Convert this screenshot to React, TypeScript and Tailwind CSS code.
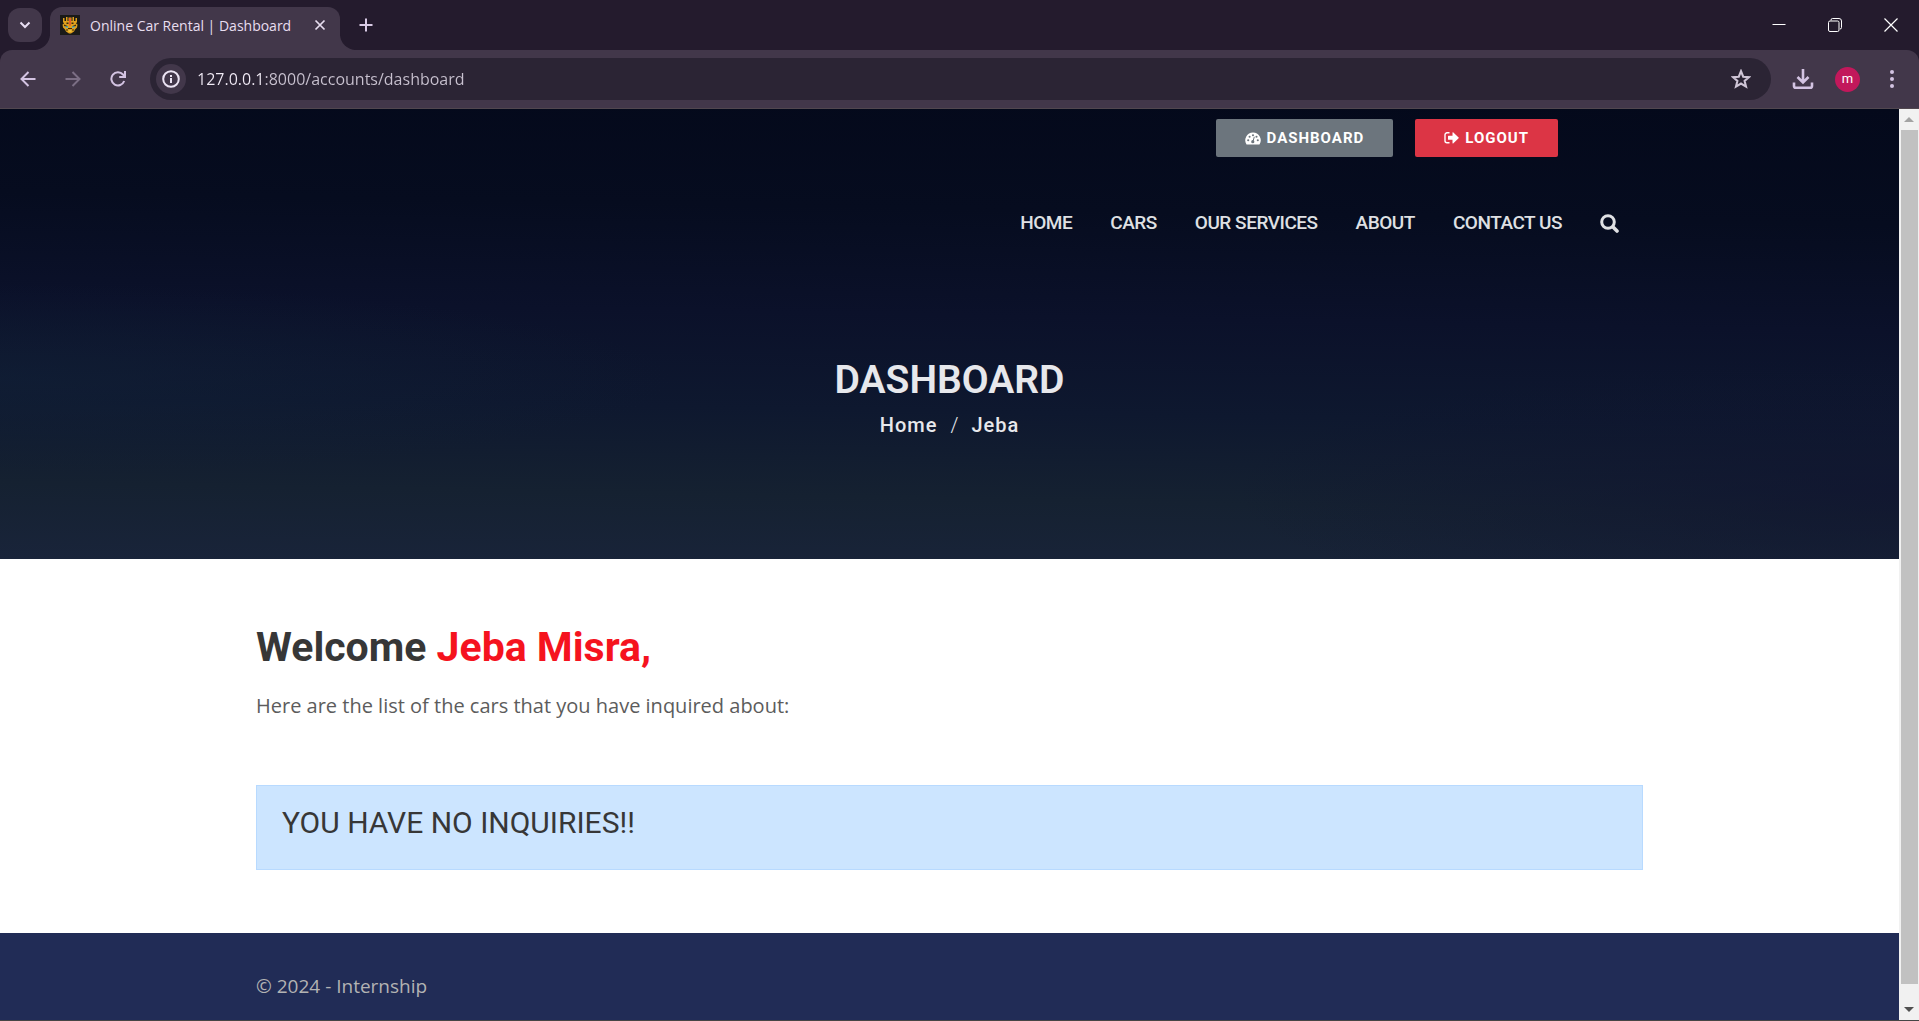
import type { ReactNode } from "react";

const navItems = ["HOME", "CARS", "OUR SERVICES", "ABOUT", "CONTACT US"];

const uiFont = "font-['Segoe_UI','Open_Sans',sans-serif]";

function IconButton({ label, className, children }: { label: string; className?: string; children: ReactNode }) {
  return (
    <button type="button" aria-label={label} className={`flex shrink-0 items-center justify-center ${className ?? ""}`}>
      {children}
    </button>
  );
}

function Favicon() {
  return (
    <svg width="20" height="20" viewBox="0 0 20 20" className="shrink-0" aria-hidden="true">
      <rect width="20" height="20" fill="#1a1a18" />
      <path d="M3 3h1.500v3H6V2h1.500v4h1V2.500h3V6h1V2H14v4h1.500V3H17v4l-1 1.500 1.500 1-.5 3-2 2-1 2-3 2H9l-3-2-1-2-2-2-.5-3L4 8.500 3 7z" fill="#e0a11c" />
      <path d="M9.300 3h1.400v7.500H9.300z" fill="#e8452f" />
      <path d="M6.500 7.500h2v1.500h-2zM11.500 7.500h2v1.500h-2zM4 9.500l3.500 1.500v1L4 11zM16 9.500L12.500 11v1L16 11zM6 14.500h2v1H6zM12 14.500h2v1h-2zM8 13h4v1H8z" fill="#3b2a10" />
      <path d="M5 11.500h3v1.300H6zM12 11.500h3l-1 1.300h-2z" fill="#45b5dc" />
      <path d="M8.500 15.500h3v1h-3z" fill="#fbe05a" />
    </svg>
  );
}

function GaugeIcon() {
  return (
    <svg width="16" height="13" viewBox="0 0 16 13" aria-hidden="true">
      <path d="M8 .5a7.700 7.700 0 0 0-6.600 11.700.7.7 0 0 0 .6.300h12a.7.7 0 0 0 .6-.3A7.700 7.700 0 0 0 8 .5z" fill="currentColor" />
      <g fill="#6c757d">
        <circle cx="3.200" cy="8.200" r="1.050" />
        <circle cx="4.600" cy="4.800" r="1.050" />
        <circle cx="8" cy="3.200" r="1.050" />
        <circle cx="11.500" cy="4.800" r="1.050" />
        <circle cx="12.800" cy="8.200" r="1.050" />
        <circle cx="7.800" cy="9.700" r="1.600" />
      </g>
      <path d="M7.900 9.700L9.200 5.200" stroke="#6c757d" strokeWidth="1" strokeLinecap="round" />
    </svg>
  );
}

function SignOutIcon() {
  return (
    <svg width="15" height="14" viewBox="0 0 15 14" aria-hidden="true">
      <path d="M5.500 1.800H3A2 2 0 0 0 1 3.800v6a2 2 0 0 0 2 2h2.500" fill="none" stroke="currentColor" strokeWidth="1.400" />
      <path d="M4.500 4.800h4V1.800a.5.5 0 0 1 .9-.4l5.200 5a.5.5 0 0 1 0 .8l-5.200 5a.5.5 0 0 1-.9-.4V8.800h-4a.5.5 0 0 1-.5-.5v-3a.5.5 0 0 1 .5-.5z" fill="currentColor" />
    </svg>
  );
}

function TabStrip() {
  return (
    <div className="flex h-[50px] items-stretch bg-[#241b2d]">
      <div className="flex items-start pl-2 pr-2 pt-2">
        <IconButton label="Search tabs" className="h-[34px] w-[34px] rounded-xl bg-[#42374a] text-[#e8def3]">
          <svg width="12" height="8" viewBox="0 0 12 8" fill="none" stroke="currentColor" strokeWidth="2" aria-hidden="true">
            <path d="M1.500 1.500L6 6l4.500-4.500" />
          </svg>
        </IconButton>
      </div>
      <div className="relative mt-[7px] flex w-[290px] items-start rounded-t-xl bg-[#42374a] pl-[10px] pr-2 pt-2 before:absolute before:bottom-0 before:-left-4 before:h-4 before:w-4 before:rounded-br-2xl before:shadow-[6px_6px_0_4px_#42374a] before:[clip-path:inset(0_0_0_0)] after:absolute after:-right-4 after:bottom-0 after:h-4 after:w-4 after:rounded-bl-2xl after:shadow-[-6px_6px_0_4px_#42374a] after:[clip-path:inset(0_0_0_0)]">
        <Favicon />
        <span className={`ml-[10px] flex-1 whitespace-nowrap text-sm leading-[22px] text-[#e8def0] ${uiFont}`}>
          Online Car Rental | Dashboard
        </span>
        <IconButton label="Close tab" className="h-5 w-6 text-[#e8def0]">
          <svg width="12" height="12" viewBox="0 0 12 12" stroke="currentColor" strokeWidth="1.700" aria-hidden="true">
            <path d="M1.500 1.500l9 9M10.500 1.500l-9 9" />
          </svg>
        </IconButton>
      </div>
      <IconButton label="New tab" className="ml-2 w-9 text-[#d9cbe6]">
        <svg width="14" height="14" viewBox="0 0 14 14" stroke="currentColor" strokeWidth="2" aria-hidden="true">
          <path d="M7 0.500v13M0.500 7h13" />
        </svg>
      </IconButton>
      <div className="ml-auto flex text-white">
        <IconButton label="Minimize" className="w-14">
          <svg width="14" height="14" viewBox="0 0 14 14" stroke="currentColor" aria-hidden="true">
            <path d="M0.500 6.500h13" />
          </svg>
        </IconButton>
        <IconButton label="Restore" className="w-14">
          <svg width="14" height="14" viewBox="0 0 14 14" fill="none" stroke="currentColor" aria-hidden="true">
            <rect x="0.500" y="3" width="10.500" height="10.500" rx="1.500" />
            <path d="M3 2.500V2A1.500 1.500 0 0 1 4.500 0.500H11A2.500 2.500 0 0 1 13.500 3v6.500A1.500 1.500 0 0 1 12 11" />
          </svg>
        </IconButton>
        <IconButton label="Close window" className="w-14">
          <svg width="14" height="14" viewBox="0 0 14 14" stroke="currentColor" strokeWidth="1.200" aria-hidden="true">
            <path d="M0.500 0.500l13 13M13.500 0.500l-13 13" />
          </svg>
        </IconButton>
      </div>
    </div>
  );
}

function Toolbar() {
  return (
    <div className="bg-[#241b2d]">
      <div className="flex h-[59px] items-center rounded-t-xl border-b border-[#51474f] bg-[#42374a] pr-[15px]">
        <div className="flex items-center pl-[5px] text-[#d3c3e2]">
          <IconButton label="Back" className="h-11 w-[45px]">
            <svg width="16" height="16" viewBox="0 0 16 16" fill="none" stroke="currentColor" strokeWidth="2" aria-hidden="true">
              <path d="M15.500 8H2M8.500 1L1.500 8l7 7" />
            </svg>
          </IconButton>
          <IconButton label="Forward" className="h-11 w-[45px] text-[#7b6e84]">
            <svg width="16" height="16" viewBox="0 0 16 16" fill="none" stroke="currentColor" strokeWidth="2" aria-hidden="true">
              <path d="M0.500 8H14M7.500 1l7 7-7 7" />
            </svg>
          </IconButton>
          <IconButton label="Reload" className="h-11 w-[45px]">
            <svg width="16" height="16" viewBox="0 0 16 16" fill="none" stroke="currentColor" strokeWidth="2" aria-hidden="true">
              <path d="M14.200 10A6.600 6.600 0 1 1 13 3.500L14.500 5.200M15 0v6H9.200" />
            </svg>
          </IconButton>
        </div>
        <div className="ml-[10px] flex h-[42px] flex-1 items-center rounded-full bg-[#2b2434] pl-1.5 pr-5">
          <IconButton label="View site information" className="h-[30px] w-[30px] rounded-full bg-[#42374a] text-[#ece4f4]">
            <svg width="18" height="18" viewBox="0 0 18 18" fill="none" stroke="currentColor" strokeWidth="2" aria-hidden="true">
              <circle cx="9" cy="9" r="7.800" />
              <path d="M9 8v5M9 5v2" />
            </svg>
          </IconButton>
          <input
            aria-label="Address"
            defaultValue="127.0.0.1:8000/accounts/dashboard"
            className={`ml-[11px] min-w-0 flex-1 bg-linear-to-r from-[#f2ecf7] from-[66px] to-[#c9c2d0] to-[66px] bg-clip-text text-base leading-6 text-transparent outline-none ${uiFont}`}
          />
          <IconButton label="Bookmark this tab" className="h-5 w-5 text-[#cfc5d6]">
            <svg width="20" height="20" viewBox="0 0 20 20" fill="none" stroke="currentColor" strokeWidth="2.100" aria-hidden="true">
              <path d="M10 2.200l2.200 5.500 5.900.4-4.500 3.800 1.400 5.700-5-3.100-5 3.100 1.400-5.700L1.900 8.100l5.900-.4z" />
            </svg>
          </IconButton>
        </div>
        <IconButton label="Downloads" className="ml-5 h-8 w-6 text-[#d3c3e2]">
          <svg width="22" height="22" viewBox="0 0 22 22" fill="none" stroke="currentColor" strokeWidth="2.600" aria-hidden="true">
            <path d="M11 1v13M5.500 9l5.500 5.500L16.500 9M2 14.500V18a1.800 1.800 0 0 0 1.800 1.800h14.400A1.800 1.800 0 0 0 20 18v-3.500" />
          </svg>
        </IconButton>
        <IconButton label="Profile" className="ml-5 h-[25px] w-[25px] rounded-full bg-[#c2185b] font-['Roboto',sans-serif] text-[13px] leading-4 text-white">
          m
        </IconButton>
        <IconButton label="Menu" className="ml-5 h-8 w-6 text-[#d3c3e2]">
          <svg width="4" height="18" viewBox="0 0 4 18" fill="currentColor" aria-hidden="true">
            <circle cx="2" cy="2" r="2" />
            <circle cx="2" cy="9" r="2" />
            <circle cx="2" cy="16" r="2" />
          </svg>
        </IconButton>
      </div>
    </div>
  );
}

function Hero() {
  return (
    <section className="min-h-[450px] bg-[radial-gradient(ellipse_at_0%_60%,rgba(18,34,56,0.5),transparent_25%),radial-gradient(ellipse_at_100%_85%,rgba(16,20,48,0.7),transparent_25%),linear-gradient(181deg,#04091b_0%,#060c1f_24%,#0b112a_46%,#0e182f_66%,#152131_84%,#19243a_100%)] font-['Roboto',sans-serif] text-[#e7e8ec]">
      <div className="mx-auto max-w-[1387px]">
        <div className="flex justify-end gap-[22px] pr-[85px] pt-[10px] text-[15px] font-bold leading-[22px] tracking-[1px] text-white">
          <a href="#dashboard" className="flex items-center gap-1.5 rounded-xs bg-[#6c757d] px-[29px] py-2">
            <GaugeIcon />
            DASHBOARD
          </a>
          <a href="#logout" className="flex items-center gap-1.5 rounded-xs bg-[#dc3545] px-[29px] py-2">
            <SignOutIcon />
            LOGOUT
          </a>
        </div>
        <nav className="mt-[52px] flex items-center justify-end gap-[38px] pr-6 text-[19px] font-medium leading-7 tracking-tight text-[#dfe0e3]">
          {navItems.map((item) => (
            <a key={item} href="#top">{item}</a>
          ))}
          <button type="button" aria-label="Search">
            <svg width="19" height="19" viewBox="0 0 19 19" fill="none" stroke="currentColor" strokeLinecap="round" aria-hidden="true">
              <circle cx="8" cy="8" r="6.300" strokeWidth="3" />
              <path d="M13 13l4 4" strokeWidth="3.600" />
            </svg>
          </button>
        </nav>
        <div className="mt-[119px] text-center">
          <h1 className="text-[39px] font-semibold leading-[48px]">DASHBOARD</h1>
          <p className="mt-[5px] flex justify-center gap-[13px] text-[20px] leading-8">
            <a href="#home" className="font-medium tracking-wider">Home</a>
            <span className="font-light">/</span>
            <span className="font-medium tracking-wider">Jeba</span>
          </p>
        </div>
      </div>
    </section>
  );
}

function Scrollbar() {
  return (
    <div className="flex w-5 shrink-0 flex-col bg-[#f1f1f1]" aria-hidden="true">
      <div className="flex h-[21px] items-center justify-center">
        <svg width="10" height="5" viewBox="0 0 10 5" fill="#a3a3a3"><path d="M0 5L5 0l5 5z" /></svg>
      </div>
      <div className="ml-0.5 mr-px flex-1 bg-[#c1c1c1]" />
      <div className="flex h-9 items-end justify-center pb-2">
        <svg width="10" height="5" viewBox="0 0 10 5" fill="#505050"><path d="M0 0h10L5 5z" /></svg>
      </div>
    </div>
  );
}

export default function App() {
  return (
    <div className="flex min-h-screen flex-col border-b border-[#454545] bg-white">
      <header>
        <TabStrip />
        <Toolbar />
      </header>
      <div className="flex flex-1">
        <div className="flex flex-1 flex-col">
          <Hero />
          <main className="mx-auto w-full max-w-[1387px] pb-[63px] pt-[63px] text-[#373737]">
            <h2 className="font-['Roboto',sans-serif] text-[41px] font-bold leading-[50px]">
              Welcome <span className="text-[#f5131e]">Jeba Misra,</span>
            </h2>
            <p className="mt-[18px] font-['Open_Sans',sans-serif] text-[20px] leading-8 text-[#5c5c5c]">
              Here are the list of the cars that you have inquired about:
            </p>
            <div className="mt-[63px] border border-[#b8daff] bg-[#cce5ff] px-[25px] pb-7 pt-[19px]" role="alert">
              <h3 className="font-['Roboto',sans-serif] text-[30px] leading-9">YOU HAVE NO INQUIRIES!!</h3>
            </div>
          </main>
          <footer className="flex-1 bg-[#212c56] pb-[18px] pt-[38px]">
            <p className="mx-auto max-w-[1387px] font-['Open_Sans',sans-serif] text-[19px] leading-[30px] text-[#b3b3b3]">
              © 2024 - Internship
            </p>
          </footer>
        </div>
        <Scrollbar />
      </div>
    </div>
  );
}
